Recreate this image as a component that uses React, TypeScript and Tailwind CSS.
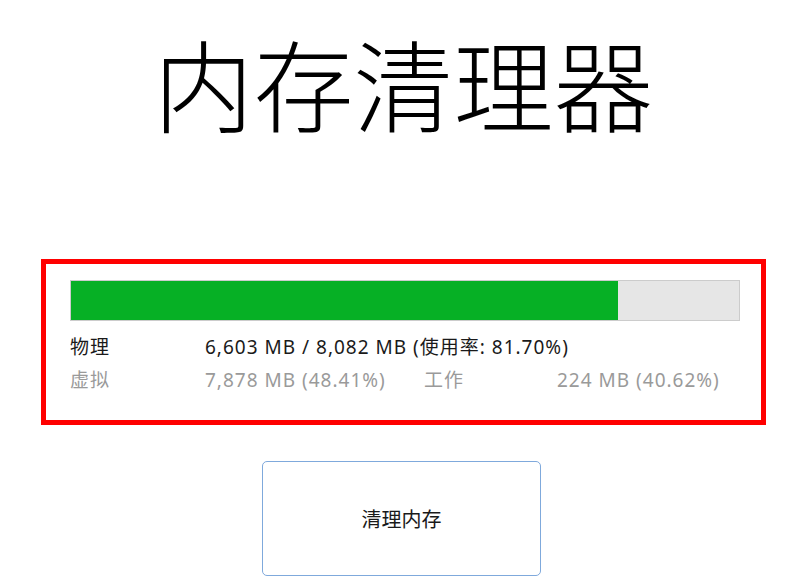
import { useState } from "react";

const App = () => {
  const [physical] = useState({ used: 6603, total: 8082, rate: 81.7 });
  const fill = (physical.used / physical.total) * 100 + 0.2;

  return (
    <div className="min-h-screen bg-white flex flex-col items-center font-['Noto_Sans','Noto_Sans_CJK_SC',sans-serif]">
      <h1 className="mt-[28px] h-[108px] text-[100px] leading-[108px] font-light text-black font-['Noto_Sans_CJK_SC',serif]">
        内存清理器
      </h1>

      <div className="mt-[123px] w-[725px] h-[166px] border-[5px] border-[#ff0000] pl-[24px] pr-[21px] pt-[16px]">
        <div className="h-[41px] bg-[#e6e6e6] border border-[#cccccc] flex">
          <div className="h-full bg-[#06b025]" style={{ width: `${fill}%` }} />
        </div>

        <div className="mt-[10px] grid grid-cols-[135px_219px_133px_1fr] text-[19px] tracking-[1px] leading-[33px]">
          <span className="text-[#1a1a1a]">物理</span>
          <span className="col-span-3 text-[#1a1a1a]">
            6,603 MB / 8,082 MB (使用率: 81.70%)
          </span>
          <span className="text-[#9a9a9a]">虚拟</span>
          <span className="text-[#9a9a9a]">7,878 MB (48.41%)</span>
          <span className="text-[#9a9a9a]">工作</span>
          <span className="text-[#9a9a9a]">224 MB (40.62%)</span>
        </div>
      </div>

      <button className="mt-[36px] ml-[-4px] w-[279px] h-[115px] rounded-[5px] border border-[#7fa9dc] bg-white text-[20px] text-[#1a1a1a] font-['Noto_Sans_CJK_SC',sans-serif]">
        清理内存
      </button>
    </div>
  );
};

export default App;
